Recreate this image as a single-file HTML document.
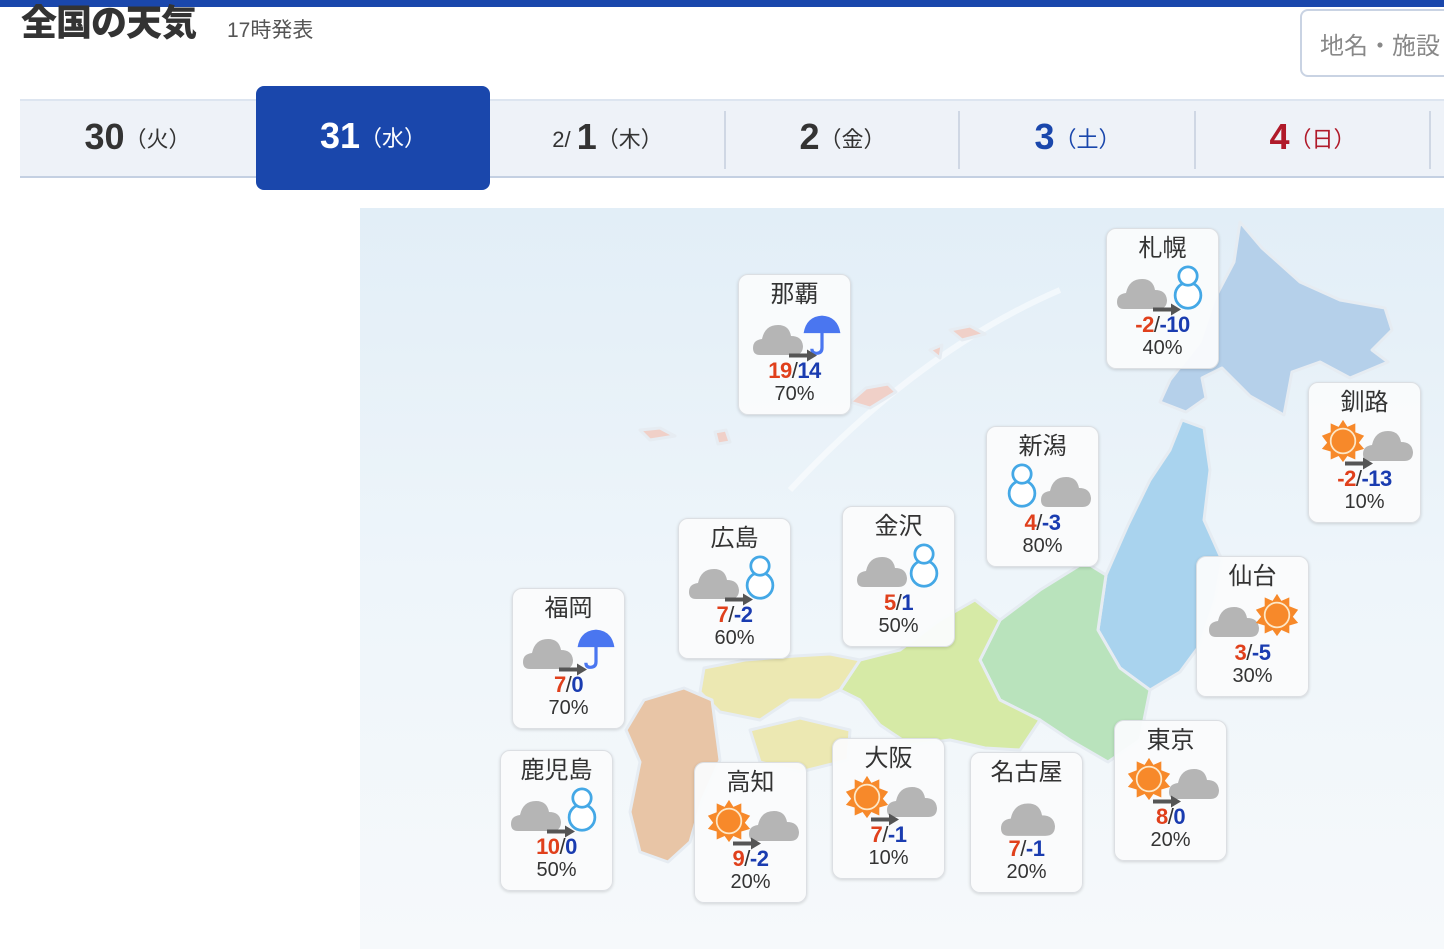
<!DOCTYPE html>
<html><head><meta charset="utf-8">
<style>
*{margin:0;padding:0;box-sizing:border-box}
body{width:1444px;height:949px;overflow:hidden;background:#fff;position:relative;font-family:"Liberation Sans","Noto Sans CJK JP",sans-serif;color:#333}
.topbar{position:absolute;left:0;top:0;width:1444px;height:7px;background:#1a47ac}
h1{position:absolute;left:21px;top:2px;font-size:36px;font-weight:900;color:#333;letter-spacing:-1px;line-height:42px}
.pub{position:absolute;left:227px;top:14px;font-size:21px;color:#555}
.search{position:absolute;left:1300px;top:9px;width:170px;height:68px;border:2px solid #c9d3e3;border-radius:8px;font-size:24px;color:#888;padding:15px 0 0 18px;white-space:nowrap}
.tabs{position:absolute;left:20px;top:99px;width:1424px;height:79px;background:#eef2f8;border-top:2px solid #dde5f0;border-bottom:2px solid #c4d0e2}
.tab{position:absolute;top:0;height:77px;width:235px;text-align:center;line-height:72px;font-size:22px;color:#333}
.tab b{font-size:36px;font-weight:bold;vertical-align:-2px}
.sep{position:absolute;top:10px;width:2px;height:58px;background:#cfd7e4}
.active{position:absolute;left:256px;top:86px;width:234px;height:104px;background:#1a47ac;border-radius:8px;color:#fff;text-align:center;line-height:100px;font-size:22px}
.active b{font-size:36px;font-weight:bold;vertical-align:-2px}
.map{position:absolute;left:360px;top:208px;width:1084px;height:741px;background:linear-gradient(180deg,#e2eef7 0%,#eef5fa 50%,#f6f9fb 100%)}
.card{position:absolute;width:113px;height:141px;background:rgba(250,251,252,.96);border:1px solid #dcdfe3;border-radius:10px;box-shadow:0 1px 3px rgba(0,0,0,.15);text-align:center}
.card .n{font-size:24px;line-height:26px;margin-top:7px;color:#333}
.card svg{display:block;margin:3px auto 0}
.card .t{font-size:22px;font-weight:bold;line-height:22px;margin-top:-3px;letter-spacing:-.5px}
.card .p{font-size:20px;line-height:24px;color:#333}
.r{color:#e0401c}.b{color:#1a3cb0}.s{color:#333;font-weight:normal}
</style></head><body>
<svg width="0" height="0" style="position:absolute">
<defs>
<symbol id="cl" viewBox="0 0 50 34"><path d="M7 34 Q0 34 0 27 Q0 19 9 18 Q12 4 25 4 Q36 4 38 15 Q49 15 50 25 Q50 34 41 34 Z" fill="#b5b5b5"/></symbol>
<symbol id="su" viewBox="0 0 50 50"><polygon fill="#f7892a" points="25,1 30,9 39,5 39,15 49,19 43,27 49,34 39,37 39,46 30,42 25,49 20,42 11,46 11,37 1,34 7,27 1,19 11,15 11,5 20,9"/><circle cx="25" cy="25" r="14" fill="#f7892a" stroke="#fde8c8" stroke-width="2"/></symbol>
<symbol id="sn" viewBox="0 0 50 50"><circle cx="25" cy="33" r="14" fill="#fff" stroke="#44a8e6" stroke-width="3"/><circle cx="25" cy="12" r="10" fill="#fff" stroke="#44a8e6" stroke-width="3"/></symbol>
<symbol id="um" viewBox="0 0 50 50"><path d="M5 24 Q8 6 25 5 Q42 6 45 24 Z" fill="#4a76f0"/><path d="M25 6 V40 Q25 46 19 46 Q14 46 14 41" fill="none" stroke="#4a76f0" stroke-width="3.5"/></symbol>
<symbol id="ar" viewBox="0 0 30 12"><path d="M0 4 H18 V0 L28 6 L18 12 V8 H0Z" fill="#555"/></symbol>
</defs></svg>

<div class="topbar"></div>
<h1>全国の天気</h1>
<div class="pub">17時発表</div>
<div class="search">地名・施設</div>

<div class="tabs">
 <div class="tab" style="left:0"><b>30</b>（火）</div>
 <div class="tab" style="left:470px">2/ <b>1</b>（木）</div>
 <div class="sep" style="left:704px"></div>
 <div class="tab" style="left:705px"><b>2</b>（金）</div>
 <div class="sep" style="left:938px"></div>
 <div class="tab" style="left:940px;color:#1a47ac"><b>3</b>（土）</div>
 <div class="sep" style="left:1174px"></div>
 <div class="tab" style="left:1175px;color:#b01a2a"><b>4</b>（日）</div>
 <div class="sep" style="left:1409px"></div>
</div>
<div class="active"><b>31</b>（水）</div>

<div class="map"></div>
<svg style="position:absolute;left:0;top:0" width="1444" height="949">
 <path d="M1060 290 Q920 350 790 490" fill="none" stroke="#fff" stroke-width="6" opacity=".5"/>
 <g stroke="#e6ecf2" stroke-width="3" stroke-linejoin="round">
 <polygon fill="#b5d0ea" points="1240,222 1262,248 1300,282 1340,300 1385,308 1392,330 1372,350 1388,362 1350,378 1320,362 1292,372 1284,415 1250,396 1222,368 1202,378 1206,398 1186,412 1160,402 1170,380 1200,342 1214,300 1234,262"/>
 <polygon fill="#a9d3ee" points="1182,420 1204,428 1210,470 1204,520 1222,560 1215,600 1200,645 1180,672 1150,690 1120,668 1098,630 1106,575 1128,525 1150,480 1170,450"/>
 <polygon fill="#b9e3bc" points="1150,690 1140,740 1108,762 1070,740 1040,720 1000,700 980,660 1000,620 1040,590 1085,562 1106,575 1098,630 1120,668"/>
 <polygon fill="#d6eaa6" points="1000,620 980,660 1000,700 1040,720 1020,750 985,748 950,740 910,745 880,725 860,700 840,690 860,660 900,650 940,620 975,600"/>
 <polygon fill="#ece8b2" points="860,660 840,690 820,700 790,700 760,720 720,712 700,692 704,668 745,660 795,656 830,654"/>
 <polygon fill="#ece8b2" points="750,730 800,718 850,730 848,760 800,772 760,762"/>
 <polygon fill="#e8c5a6" points="644,700 684,688 712,700 720,760 702,800 690,842 668,862 640,852 630,812 640,762 626,730"/>
 <polygon fill="#f0d0c8" points="850,402 866,388 888,384 896,392 870,408"/>
 <polygon fill="#f0d0c8" points="950,330 970,326 985,334 962,340"/>
 <polygon fill="#f0d0c8" points="640,430 660,428 675,436 650,440"/>
 <polygon fill="#f0d0c8" points="715,432 726,430 730,442 718,444"/>
 <polygon fill="#f0d0c8" points="930,350 942,345 940,358"/>
 </g>
</svg>

<div class="card" style="left:738px;top:274px"><div class="n">那覇</div><svg width="100" height="52"><use href="#cl" x="8" y="10" width="50" height="34"/><use href="#um" x="54" y="0" width="46" height="46"/><use href="#ar" x="44" y="38" width="30" height="13"/></svg><div class="t"><span class="r">19</span><span class="s">/</span><span class="b">14</span></div><div class="p">70%</div></div>

<div class="card" style="left:1106px;top:228px"><div class="n">札幌</div><svg width="100" height="52"><use href="#cl" x="4" y="10" width="50" height="34"/><use href="#sn" x="52" y="0" width="46" height="46"/><use href="#ar" x="40" y="38" width="30" height="13"/></svg><div class="t"><span class="r">-2</span><span class="s">/</span><span class="b">-10</span></div><div class="p">40%</div></div>

<div class="card" style="left:1308px;top:382px"><div class="n">釧路</div><svg width="100" height="52"><use href="#su" x="6" y="0" width="44" height="44"/><use href="#cl" x="48" y="8" width="50" height="34"/><use href="#ar" x="30" y="38" width="30" height="13"/></svg><div class="t"><span class="r">-2</span><span class="s">/</span><span class="b">-13</span></div><div class="p">10%</div></div>

<div class="card" style="left:986px;top:426px"><div class="n">新潟</div><svg width="100" height="52"><use href="#sn" x="6" y="0" width="46" height="46"/><use href="#cl" x="48" y="10" width="50" height="34"/></svg><div class="t"><span class="r">4</span><span class="s">/</span><span class="b">-3</span></div><div class="p">80%</div></div>

<div class="card" style="left:842px;top:506px"><div class="n">金沢</div><svg width="100" height="52"><use href="#cl" x="8" y="10" width="50" height="34"/><use href="#sn" x="52" y="0" width="46" height="46"/></svg><div class="t"><span class="r">5</span><span class="s">/</span><span class="b">1</span></div><div class="p">50%</div></div>

<div class="card" style="left:678px;top:518px"><div class="n">広島</div><svg width="100" height="52"><use href="#cl" x="4" y="10" width="50" height="34"/><use href="#sn" x="52" y="0" width="46" height="46"/><use href="#ar" x="40" y="38" width="30" height="13"/></svg><div class="t"><span class="r">7</span><span class="s">/</span><span class="b">-2</span></div><div class="p">60%</div></div>

<div class="card" style="left:512px;top:588px"><div class="n">福岡</div><svg width="100" height="52"><use href="#cl" x="4" y="10" width="50" height="34"/><use href="#um" x="54" y="0" width="46" height="46"/><use href="#ar" x="40" y="38" width="30" height="13"/></svg><div class="t"><span class="r">7</span><span class="s">/</span><span class="b">0</span></div><div class="p">70%</div></div>

<div class="card" style="left:1196px;top:556px"><div class="n">仙台</div><svg width="100" height="52"><use href="#cl" x="6" y="10" width="50" height="34"/><use href="#su" x="52" y="0" width="44" height="44"/></svg><div class="t"><span class="r">3</span><span class="s">/</span><span class="b">-5</span></div><div class="p">30%</div></div>

<div class="card" style="left:1114px;top:720px"><div class="n">東京</div><svg width="100" height="52"><use href="#su" x="6" y="0" width="44" height="44"/><use href="#cl" x="48" y="8" width="50" height="34"/><use href="#ar" x="32" y="38" width="30" height="13"/></svg><div class="t"><span class="r">8</span><span class="s">/</span><span class="b">0</span></div><div class="p">20%</div></div>

<div class="card" style="left:970px;top:752px"><div class="n">名古屋</div><svg width="100" height="52"><use href="#cl" x="24" y="10" width="54" height="37"/></svg><div class="t"><span class="r">7</span><span class="s">/</span><span class="b">-1</span></div><div class="p">20%</div></div>

<div class="card" style="left:832px;top:738px"><div class="n">大阪</div><svg width="100" height="52"><use href="#su" x="6" y="0" width="44" height="44"/><use href="#cl" x="48" y="8" width="50" height="34"/><use href="#ar" x="32" y="38" width="30" height="13"/></svg><div class="t"><span class="r">7</span><span class="s">/</span><span class="b">-1</span></div><div class="p">10%</div></div>

<div class="card" style="left:694px;top:762px"><div class="n">高知</div><svg width="100" height="52"><use href="#su" x="6" y="0" width="44" height="44"/><use href="#cl" x="48" y="8" width="50" height="34"/><use href="#ar" x="32" y="38" width="30" height="13"/></svg><div class="t"><span class="r">9</span><span class="s">/</span><span class="b">-2</span></div><div class="p">20%</div></div>

<div class="card" style="left:500px;top:750px"><div class="n">鹿児島</div><svg width="100" height="52"><use href="#cl" x="4" y="10" width="50" height="34"/><use href="#sn" x="52" y="0" width="46" height="46"/><use href="#ar" x="40" y="38" width="30" height="13"/></svg><div class="t"><span class="r">10</span><span class="s">/</span><span class="b">0</span></div><div class="p">50%</div></div>

</body></html>
